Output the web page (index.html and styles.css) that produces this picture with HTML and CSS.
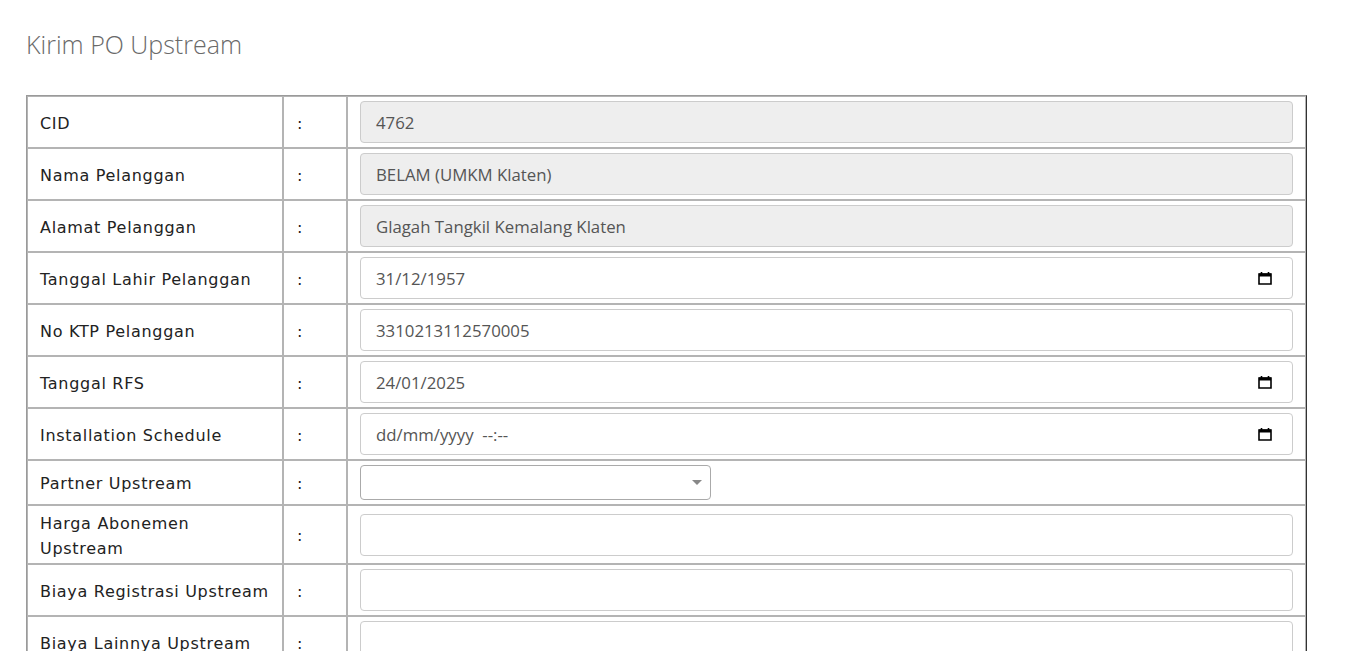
FILE: index.html
```html
<!DOCTYPE html>
<html>
<head>
<meta charset="utf-8">
<title>Kirim PO Upstream</title>
<link rel="stylesheet" href="styles.css">
</head>
<body>
<div class="page">
  <h1 class="title">Kirim PO Upstream</h1>
  <table class="form-table">
    <colgroup><col class="c-label"><col class="c-sep"><col></colgroup>
    <tr><td class="label">CID</td><td class="sep">:</td><td class="field"><div class="input readonly">4762</div></td></tr>
    <tr><td class="label">Nama Pelanggan</td><td class="sep">:</td><td class="field"><div class="input readonly">BELAM (UMKM Klaten)</div></td></tr>
    <tr><td class="label">Alamat Pelanggan</td><td class="sep">:</td><td class="field"><div class="input readonly">Glagah Tangkil Kemalang Klaten</div></td></tr>
    <tr><td class="label">Tanggal Lahir Pelanggan</td><td class="sep">:</td><td class="field"><div class="input date"><span>31/12/1957</span><svg class="cal" width="14" height="14" viewBox="0 0 14 14"><path d="M1 3h12v10H1z" fill="none" stroke="#000" stroke-width="1.6"/><path d="M1 2.5h12v3H1z" fill="#000"/><path d="M3.5 1v3M10.5 1v3" stroke="#000" stroke-width="1.6"/></svg></div></td></tr>
    <tr><td class="label">No KTP Pelanggan</td><td class="sep">:</td><td class="field"><div class="input">3310213112570005</div></td></tr>
    <tr><td class="label">Tanggal RFS</td><td class="sep">:</td><td class="field"><div class="input date"><span>24/01/2025</span><svg class="cal" width="14" height="14" viewBox="0 0 14 14"><path d="M1 3h12v10H1z" fill="none" stroke="#000" stroke-width="1.6"/><path d="M1 2.5h12v3H1z" fill="#000"/><path d="M3.5 1v3M10.5 1v3" stroke="#000" stroke-width="1.6"/></svg></div></td></tr>
    <tr><td class="label">Installation Schedule</td><td class="sep">:</td><td class="field"><div class="input date"><span>dd/mm/yyyy&nbsp; --:--</span><svg class="cal" width="14" height="14" viewBox="0 0 14 14"><path d="M1 3h12v10H1z" fill="none" stroke="#000" stroke-width="1.6"/><path d="M1 2.5h12v3H1z" fill="#000"/><path d="M3.5 1v3M10.5 1v3" stroke="#000" stroke-width="1.6"/></svg></div></td></tr>
    <tr><td class="label">Partner Upstream</td><td class="sep">:</td><td class="field"><div class="select"><span class="arrow"></span></div></td></tr>
    <tr><td class="label">Harga Abonemen<br>Upstream</td><td class="sep">:</td><td class="field"><div class="input"></div></td></tr>
    <tr><td class="label">Biaya Registrasi Upstream</td><td class="sep">:</td><td class="field"><div class="input"></div></td></tr>
    <tr><td class="label">Biaya Lainnya Upstream</td><td class="sep">:</td><td class="field"><div class="input"></div></td></tr>
    <tr><td class="label">Keterangan</td><td class="sep">:</td><td class="field"><div class="input"></div></td></tr>
  </table>
</div>
</body>
</html>
```

FILE: styles.css
```css
html, body {
  margin: 0;
  padding: 0;
  background: #fff;
}
.page {
  padding: 0 26px;
}
.title {
  margin: 0;
  padding: 30px 0 36px;
  font-family: "Open Sans", sans-serif;
  font-weight: 300;
  font-size: 25px;
  line-height: 29px;
  color: #6a6a6a;
}
.form-table {
  width: 1281px;
  table-layout: fixed;
  border-collapse: separate;
  border-spacing: 0;
  border: 1px solid;
  border-color: #9a9a9a #333 #333 #9a9a9a;
}
.c-label { width: 256px; }
.c-sep { width: 64px; }
.form-table td {
  border: 1px solid #b4b4b4;
  padding: 6px 12px 2px 12px;
  vertical-align: middle;
  font-family: "DejaVu Sans", Verdana, sans-serif;
  font-size: 16px;
  letter-spacing: 0.7px;
  line-height: 24.5px;
  color: #222;
}
.form-table td.sep {
  padding-left: 13px;
}
.form-table td.field {
  padding: 4px 12px 4px 12px;
  letter-spacing: 0;
}
.input {
  box-sizing: border-box;
  height: 42px;
  border: 1px solid #ccc;
  border-radius: 4px;
  padding: 2px 15px 0;
  display: flex;
  align-items: center;
  font-family: "Open Sans", sans-serif;
  font-size: 16.8px;
  color: #555;
  background: #fff;
}
.input.readonly {
  background: #eee;
}
.input.date {
  justify-content: space-between;
  padding-right: 20px;
}
.cal {
  display: block;
  margin-top: -2px;
}
.select {
  box-sizing: border-box;
  width: 351px;
  height: 35px;
  border: 1px solid #aaa;
  border-radius: 4px;
  display: flex;
  align-items: center;
  justify-content: flex-end;
  padding-right: 8px;
  background: #fff;
}
.arrow {
  width: 0;
  height: 0;
  border-left: 5px solid transparent;
  border-right: 5px solid transparent;
  border-top: 5px solid #888;
}
```
